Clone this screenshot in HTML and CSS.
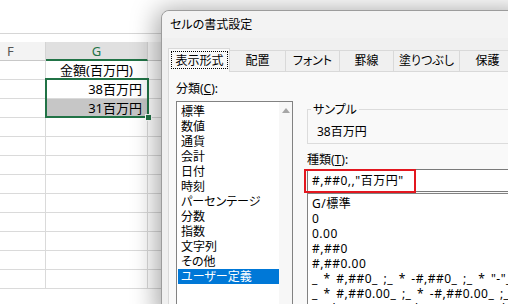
FILE: index.html
```html
<!DOCTYPE html>
<html lang="ja">
<head>
    <meta charset="UTF-8">
    <title>セルの書式設定</title>
    <link rel="stylesheet" href="styles.css">
</head>
<body>
    <div class="sheet">
        <div class="formula-bar"></div>
        <div class="grid">
            <div class="hdr hdr-f">F</div>
            <div class="hdr hdr-g">G</div>
            <div class="hdr"></div>

            <div class="cell"></div><div class="cell center">金額(百万円)</div><div class="cell"></div>
            <div class="cell"></div><div class="cell right">38百万円</div><div class="cell"></div>
            <div class="cell"></div><div class="cell right shaded">31百万円</div><div class="cell"></div>
            <div class="cell"></div><div class="cell"></div><div class="cell"></div>
            <div class="cell"></div><div class="cell"></div><div class="cell"></div>
            <div class="cell"></div><div class="cell"></div><div class="cell"></div>
            <div class="cell"></div><div class="cell"></div><div class="cell"></div>
            <div class="cell"></div><div class="cell"></div><div class="cell"></div>
            <div class="cell"></div><div class="cell"></div><div class="cell"></div>
            <div class="cell"></div><div class="cell"></div><div class="cell"></div>
            <div class="cell"></div><div class="cell"></div><div class="cell"></div>
            <div class="cell"></div><div class="cell"></div><div class="cell"></div>
        </div>
        <!-- selected range G2:G3 -->
        <div class="selection"><span class="handle"></span></div>
    </div>

    <div class="dialog">
        <div class="titlebar">セルの書式設定</div>
        <div class="tabs">
            <div class="tab active" style="width: 62px"><span class="focus">表示形式</span></div>
            <div class="tab" style="width: 56px">配置</div>
            <div class="tab" style="width: 54px">フォント</div>
            <div class="tab" style="width: 54px">罫線</div>
            <div class="tab" style="width: 66px">塗りつぶし</div>
            <div class="tab" style="width: 56px">保護</div>
        </div>
        <div class="panel">
            <div class="col-left">
                <div class="label">分類(<u>C</u>):</div>
                <div class="listbox">
                    <ul class="items">
                        <li>標準</li>
                        <li>数値</li>
                        <li>通貨</li>
                        <li>会計</li>
                        <li>日付</li>
                        <li>時刻</li>
                        <li>パーセンテージ</li>
                        <li>分数</li>
                        <li>指数</li>
                        <li>文字列</li>
                        <li>その他</li>
                        <li class="selected">ユーザー定義</li>
                    </ul>
                    <div class="vscroll"><span class="arrow-up"></span></div>
                </div>
            </div>
            <div class="col-right">
                <fieldset class="sample">
                    <legend>サンプル</legend>
                    <div class="sample-value">38百万円</div>
                </fieldset>
                <div class="label type-label">種類(<u>T</u>):</div>
                <div class="input-wrap">
                    <div class="input">#,##0,,"百万円"</div>
                    <span class="mark"></span>
                </div>
                <ul class="formats">
                    <li>G/標準</li>
                    <li>0</li>
                    <li>0.00</li>
                    <li>#,##0</li>
                    <li>#,##0.00</li>
                    <li>_ * #,##0_ ;_ * -#,##0_ ;_ * "-"_ ;_ @_ </li>
                    <li>_ * #,##0.00_ ;_ * -#,##0.00_ ;_ * "-"??_ ;_ @_ </li>
                    <li>_ ¥* #,##0_ ;_ ¥* -#,##0_ ;_ ¥* "-"_ ;_ @_ </li>
                </ul>
            </div>
        </div>
    </div>
</body>
</html>
```

FILE: styles.css
```css
* {
    box-sizing: border-box;
}
body {
    margin: 0;
    width: 508px;
    height: 304px;
    overflow: hidden;
    position: relative;
    background: #fff;
    font-family: "Noto Sans", "Noto Sans CJK JP", sans-serif;
    color: #000;
}

/* spreadsheet behind the dialog */
.sheet {
    position: relative;
    font-size: 13px;
}
.formula-bar {
    height: 34px;
    border-bottom: 1px solid #d6d6d6;
    margin-bottom: 8px;
}
.grid {
    display: grid;
    grid-template-columns: 46px 102px 80px;
    grid-auto-rows: 19px;
}
.hdr {
    background: #f3f3f3;
    border-right: 1px solid #d4d4d4;
    border-bottom: 1px solid #c8c8c8;
    color: #555;
    line-height: 18px;
}
.hdr-f {
    padding-left: 7px;
}
.hdr-g {
    background: #e0e0e0;
    color: #217346;
    text-align: center;
    border-bottom: 2px solid #217346;
}
.cell {
    border-right: 1px solid #dadada;
    border-bottom: 1px solid #dadada;
    line-height: 18px;
    padding: 0 5px;
    white-space: nowrap;
}
.center {
    text-align: center;
}
.right {
    text-align: right;
}
.shaded {
    background: #c6c6c6;
}
.selection {
    position: absolute;
    left: 45px;
    top: 78px;
    width: 104px;
    height: 40px;
    border: 2px solid #217346;
}
.handle {
    position: absolute;
    right: -5px;
    bottom: -5px;
    width: 7px;
    height: 7px;
    background: #217346;
    border: 1px solid #fff;
}

/* format cells dialog */
.dialog {
    position: absolute;
    left: 161px;
    top: 10px;
    width: 370px;
    height: 310px;
    background: #f0f0f0;
    border: 1px solid #9c9c9c;
    border-radius: 8px 0 0 0;
    box-shadow: -4px 0 26px rgba(0, 0, 0, 0.36);
    display: flex;
    flex-direction: column;
    font-size: 12px;
    font-feature-settings: "palt";
}
.titlebar {
    flex-shrink: 0;
    height: 27px;
    line-height: 27px;
    padding-left: 8px;
    background: #f3f3f3;
    border-radius: 8px 0 0 0;
}
.tabs {
    flex-shrink: 0;
    height: 33px;
    display: flex;
    align-items: flex-end;
    padding-left: 6px;
}
.tab {
    height: 21px;
    line-height: 20px;
    text-align: center;
    border-top: 1px solid #d9d9d9;
    border-right: 1px solid #d9d9d9;
    background: #f0f0f0;
}
.tab.active {
    height: 24px;
    margin-bottom: -1px;
    border-left: 1px solid #d9d9d9;
    background: #f9f9f9;
    position: relative;
    z-index: 1;
    padding: 2px 1px 0 2px;
}
.focus {
    display: block;
    height: 18px;
    line-height: 17px;
    border: 1px dotted #000;
}
.panel {
    flex: 1;
    min-height: 0;
    margin-left: 6px;
    background: #f9f9f9;
    border-top: 1px solid #d9d9d9;
    border-left: 1px solid #d9d9d9;
    display: flex;
    gap: 14px;
    padding: 9px 0 0 7px;
}
.label {
    line-height: 15px;
}
.col-left {
    width: 117px;
    flex-shrink: 0;
}
.listbox {
    margin-top: 5px;
    height: 220px;
    background: #fff;
    border: 1px solid #828282;
    display: flex;
}
.items {
    list-style: none;
    margin: 0;
    padding: 2px 0 0;
    flex: 1;
}
.items li {
    line-height: 15px;
    margin-left: 1px;
    padding-left: 3px;
    white-space: nowrap;
}
.items li.selected {
    background: #0078d7;
    color: #fff;
}
.vscroll {
    width: 13px;
    background: #f7f7f7;
    position: relative;
}
.arrow-up {
    position: absolute;
    left: 3px;
    top: 6px;
    border-left: 4px solid transparent;
    border-right: 4px solid transparent;
    border-bottom: 5px solid #a6a6a6;
}
.col-right {
    flex: 1;
    padding-top: 21px;
}
.sample {
    margin: 0;
    padding: 7px 9px 4px;
    border: 1px solid #dcdcdc;
}
.sample legend {
    margin-left: -6px;
    padding: 0 2px;
    line-height: 15px;
}
.sample-value {
    line-height: 15px;
}
.type-label {
    margin-top: 8px;
}
.input-wrap {
    position: relative;
    margin-top: 2px;
}
.input {
    height: 23px;
    line-height: 22px;
    padding-left: 4px;
    background: #fff;
    border: 1px solid #7a7a7a;
    white-space: nowrap;
    letter-spacing: 0.5px;
}
.mark {
    position: absolute;
    left: -3px;
    top: 0;
    width: 112px;
    height: 24px;
    border: 2px solid #e3171f;
}
.formats {
    list-style: none;
    margin: 1px 0 0;
    padding: 2px 0 0 4px;
    height: 140px;
    background: #fff;
    border: 1px solid #828282;
    letter-spacing: 0.5px;
    word-spacing: 2px;
}
.formats li {
    line-height: 15px;
    white-space: pre;
}
```
